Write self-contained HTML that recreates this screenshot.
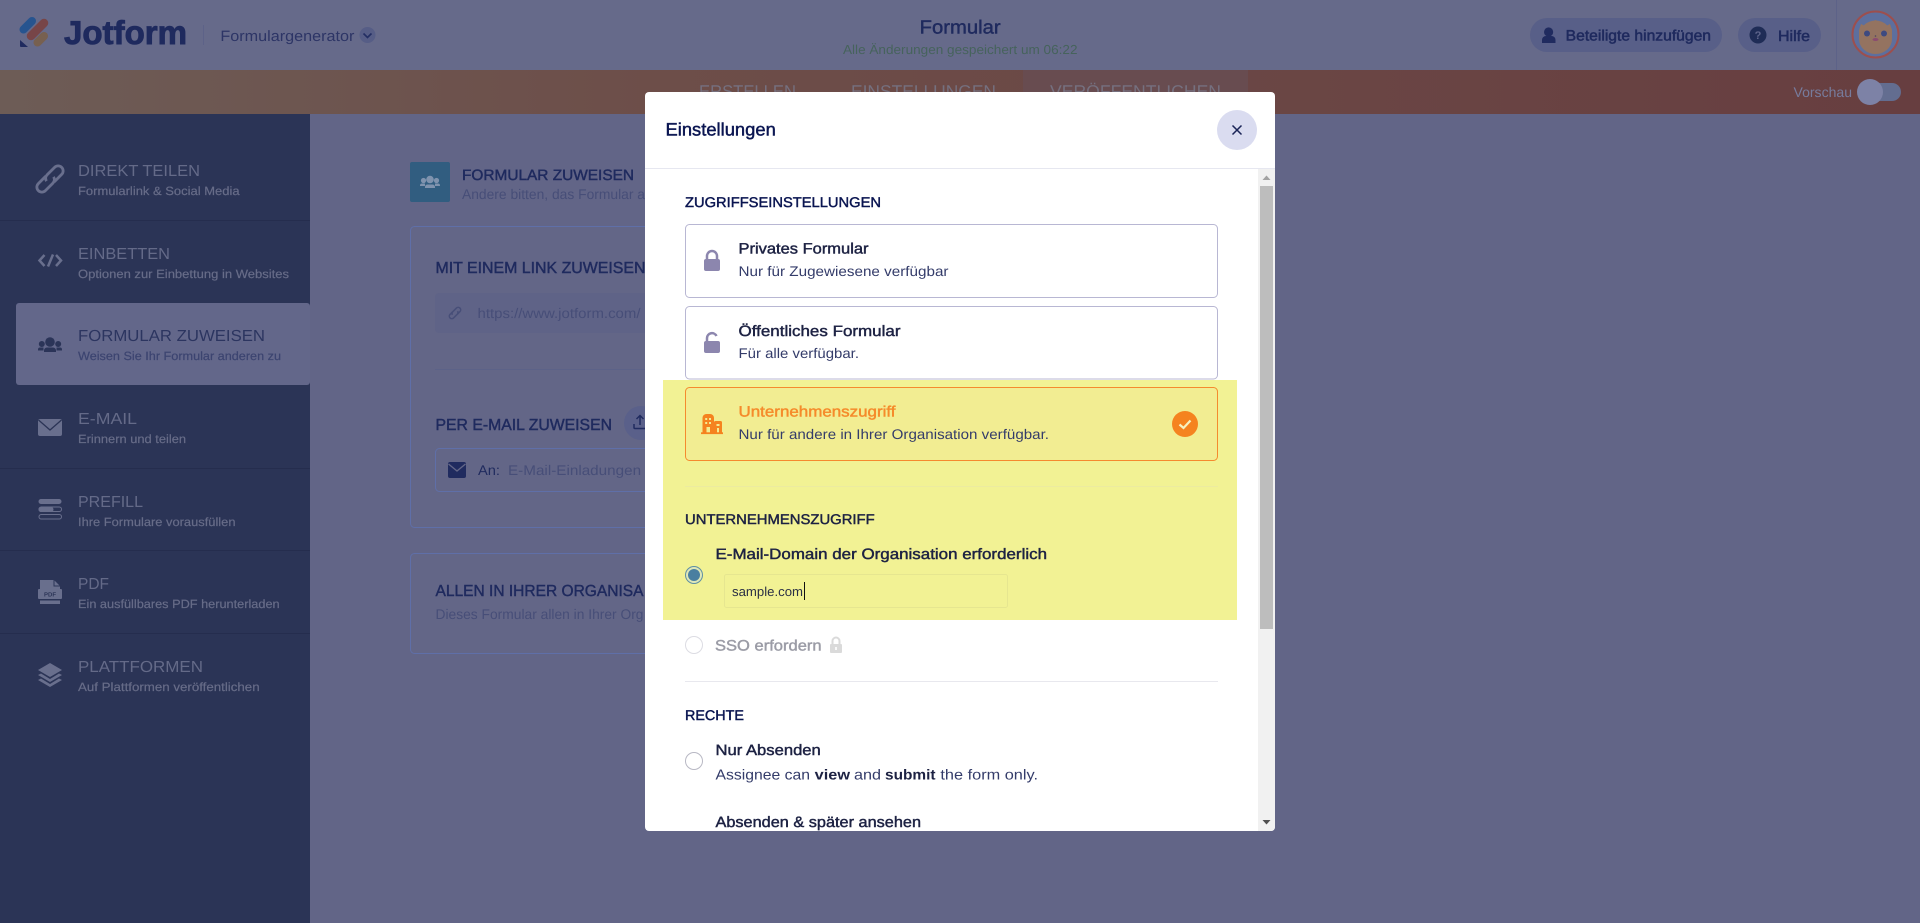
<!DOCTYPE html>
<html lang="de"><head><meta charset="utf-8"><title>Formular</title>
<style>
html,body{margin:0;padding:0;width:1920px;height:923px;overflow:hidden;background:#626587}
svg{display:block;position:absolute;left:0;top:0}
text{font-family:"Liberation Sans",sans-serif;text-rendering:geometricPrecision;stroke-width:0}
.m{stroke-width:.45}
.t{stroke-width:.2}
.b{font-weight:700}
.navy{fill:#1f2a5e;stroke:#1f2a5e}
.dk{fill:#0a1551;stroke:#0a1551}
.st{fill:#646a88;stroke:#646a88}
.ss{fill:#676c88;stroke:#676c88}
.mut{fill:#474e78;stroke:#474e78}
.body{fill:#343c6a;stroke:#343c6a}
.it{fill:#1d2243;stroke:#1d2243}
</style></head><body>
<svg width="1920" height="923" viewBox="0 0 1920 923" xmlns="http://www.w3.org/2000/svg">
<defs>
<linearGradient id="band" x1="0" x2="1" y1="0" y2="0"><stop offset="0" stop-color="#6d5c56"/><stop offset=".34" stop-color="#6d4e49"/><stop offset="1" stop-color="#673e40"/></linearGradient>
<clipPath id="mc"><rect x="645" y="92" width="630" height="739" rx="4"/></clipPath>
</defs>

<!-- page -->
<rect width="1920" height="923" fill="#626587"/>
<rect width="1920" height="70" fill="#666a8a"/>
<rect y="70" width="1920" height="44" fill="url(#band)"/>
<rect x="1023" y="70" width="225" height="44" fill="#684c50"/>

<!-- logo -->
<g fill="none" stroke-linecap="round">
<line x1="23.500" y1="29.500" x2="32" y2="21" stroke="#27548f" stroke-width="8"/>
<line x1="31" y1="36" x2="44" y2="23" stroke="#774548" stroke-width="8.500"/>
<line x1="37.500" y1="42.500" x2="44" y2="36" stroke="#776050" stroke-width="8"/>
</g>
<path d="M20 40 L28 47 H21 a1 1 0 0 1 -1 -1Z" fill="#202b5f"/>
<text x="64" y="44" font-size="33" class="b navy" style="stroke-width:.9" textLength="123" lengthAdjust="spacingAndGlyphs">Jotform</text>
<rect x="203" y="25" width="1" height="20" fill="#5d6288"/>
<text x="220.400" y="41" font-size="15" style="fill:#2d3566" textLength="134" lengthAdjust="spacingAndGlyphs">Formulargenerator</text>
<circle cx="367.500" cy="35" r="8" fill="#565d86"/>
<path d="M363.500 33.500 L367.500 37.500 L371.500 33.500" fill="none" stroke="#232e63" stroke-width="1.600"/>

<text x="919.600" y="33.700" font-size="19" class="navy m" textLength="81" lengthAdjust="spacingAndGlyphs">Formular</text>
<text x="843" y="54" font-size="13" style="fill:#46635c" textLength="234.500" lengthAdjust="spacingAndGlyphs">Alle Änderungen gespeichert um 06:22</text>

<rect x="1530" y="18" width="192" height="34" rx="17" fill="#585f88"/>
<circle cx="1548.600" cy="32" r="4.600" fill="#202b5f"/>
<path d="M1542 43 v-3 a4 4 0 0 1 4 -4 h5.500 a4 4 0 0 1 4 4 v3Z" fill="#202b5f"/>
<text x="1565.700" y="40.700" font-size="15" class="navy" style="stroke-width:.55" textLength="145.300" lengthAdjust="spacingAndGlyphs">Beteiligte hinzufügen</text>
<rect x="1738" y="18" width="83" height="34" rx="17" fill="#585f88"/>
<circle cx="1758" cy="35" r="8.500" fill="#1f2c56"/>
<text x="1758" y="39" font-size="11" class="b" text-anchor="middle" style="fill:#5f658c">?</text>
<text x="1778" y="41" font-size="15" class="navy" style="stroke-width:.55" textLength="32" lengthAdjust="spacingAndGlyphs">Hilfe</text>
<rect x="1836" y="0" width="1" height="70" fill="#5d6288"/>

<!-- avatar -->
<circle cx="1875.500" cy="34.500" r="22.500" fill="#5d6f9e"/>
<path d="M1859 30 l2 -6 4 2 10.500 -6 10.500 6 4 -2 2 6 v9 a16.500 15 0 0 1 -33 0Z" fill="#947360"/>
<circle cx="1875.500" cy="37" r="16.500" fill="#947360"/>
<circle cx="1875.500" cy="34.500" r="23" fill="none" stroke="#9c4f4e" stroke-width="2"/>
<circle cx="1867" cy="33.500" r="3" fill="#3e4a80"/><circle cx="1884" cy="33.500" r="3" fill="#3e4a80"/>
<circle cx="1875.500" cy="36" r=".8" fill="#4a4560"/>
<ellipse cx="1875.500" cy="39.500" rx="3" ry="1.500" fill="#8a4a70"/>

<!-- tabs -->
<text x="699" y="97" font-size="17" style="fill:#75707f" textLength="97" lengthAdjust="spacingAndGlyphs">ERSTELLEN</text>
<text x="851" y="97" font-size="17" style="fill:#75707f" textLength="145" lengthAdjust="spacingAndGlyphs">EINSTELLUNGEN</text>
<text x="1050" y="97" font-size="17" style="fill:#75707f" textLength="171" lengthAdjust="spacingAndGlyphs">VERÖFFENTLICHEN</text>
<text x="1793.500" y="97" font-size="14" style="fill:#777b9c" textLength="58.500" lengthAdjust="spacingAndGlyphs">Vorschau</text>
<rect x="1860" y="83" width="41" height="18" rx="9" fill="#636d90"/>
<circle cx="1870" cy="92" r="13" fill="#7d82a6"/>

<!-- sidebar -->
<rect y="114" width="310" height="809" fill="#2b3456"/>
<g fill="#252d4e">
<rect y="220" width="310" height="1"/><rect y="468" width="310" height="1"/><rect y="550" width="310" height="1"/><rect y="633" width="310" height="1"/>
</g>
<rect x="16" y="303" width="294" height="82" rx="3" fill="#63678a"/>

<g>
<!-- link icon -->
<g fill="none" stroke="#696f8d" stroke-width="2.800" transform="rotate(-45 50 179)">
<path d="M49 174 H38.500 a5 5 0 0 0 0 10 H49 a5 5 0 0 0 5 -4"/>
<path d="M51 184 H61.500 a5 5 0 0 0 0 -10 H51 a5 5 0 0 0 -5 4"/>
</g>
<text x="78" y="176" font-size="16" class="st" textLength="122" lengthAdjust="spacingAndGlyphs">DIREKT TEILEN</text>
<text x="78" y="195" font-size="12" class="ss t" textLength="161.600" lengthAdjust="spacingAndGlyphs">Formularlink &amp; Social Media</text>

<!-- code icon -->
<g fill="none" stroke="#696f8d" stroke-width="2.500">
<polyline points="44.500,255 39.500,260.500 44.500,266"/><line x1="53" y1="254.500" x2="48" y2="266.500"/><polyline points="56,255 61,260.500 56,266"/>
</g>
<text x="78" y="259" font-size="16" class="st" textLength="92" lengthAdjust="spacingAndGlyphs">EINBETTEN</text>
<text x="78" y="278" font-size="12" class="ss t" textLength="211" lengthAdjust="spacingAndGlyphs">Optionen zur Einbettung in Websites</text>

<!-- group icon -->
<g fill="#2b3458">
<circle cx="50" cy="342" r="4.800"/><circle cx="41.800" cy="344" r="3"/><circle cx="58.200" cy="344" r="3"/>
<path d="M44 352 v-1.500 a3 3 0 0 1 3 -3 h6 a3 3 0 0 1 3 3 v1.500Z"/>
<path d="M38 350.500 v-1 a2 2 0 0 1 2 -2 h3.500 v3Z M62 350.500 v-1 a2 2 0 0 0 -2 -2 h-3.500 v3Z"/>
</g>
<text x="78" y="341" font-size="16" style="fill:#2c3560" textLength="187" lengthAdjust="spacingAndGlyphs">FORMULAR ZUWEISEN</text>
<text x="78" y="360" font-size="12" class="t" style="fill:#3c4470;stroke:#3c4470" textLength="203" lengthAdjust="spacingAndGlyphs">Weisen Sie Ihr Formular anderen zu</text>

<!-- mail -->
<rect x="38" y="419" width="24" height="17" rx="2" fill="#696f8d"/>
<path d="M38.500 420 L50 430 L61.500 420" fill="none" stroke="#2b3456" stroke-width="1.300"/>
<text x="78" y="424" font-size="16" class="st" textLength="59" lengthAdjust="spacingAndGlyphs">E-MAIL</text>
<text x="78" y="443" font-size="12" class="ss t" textLength="108" lengthAdjust="spacingAndGlyphs">Erinnern und teilen</text>

<!-- prefill -->
<rect x="38.500" y="499" width="23" height="5" rx="2.500" fill="#696f8d"/>
<rect x="38.500" y="507" width="15" height="5" rx="2.500" fill="#696f8d"/>
<rect x="39" y="507" width="22.500" height="4.500" rx="2.250" fill="none" stroke="#696f8d"/>
<rect x="39" y="514.500" width="22.500" height="4.500" rx="2.250" fill="none" stroke="#696f8d"/>
<text x="78" y="507" font-size="16" class="st" textLength="65" lengthAdjust="spacingAndGlyphs">PREFILL</text>
<text x="78" y="526" font-size="12" class="ss t" textLength="157.500" lengthAdjust="spacingAndGlyphs">Ihre Formulare vorausfüllen</text>

<!-- pdf -->
<path d="M40 590 V580 H54 L60 586 V590Z" fill="#696f8d"/>
<path d="M54 580 V586 H60" fill="none" stroke="#2b3456"/>
<rect x="38" y="589" width="24" height="10" rx="1" fill="#696f8d"/>
<rect x="40" y="600.500" width="20" height="3.500" fill="#696f8d"/>
<text x="50" y="596.500" font-size="6" class="b" text-anchor="middle" style="fill:#2b3456">PDF</text>
<text x="78" y="589" font-size="16" class="st" textLength="31" lengthAdjust="spacingAndGlyphs">PDF</text>
<text x="78" y="608" font-size="12" class="ss t" textLength="201.600" lengthAdjust="spacingAndGlyphs">Ein ausfüllbares PDF herunterladen</text>

<!-- layers -->
<path d="M50 663 L62 670 L50 677 L38 670Z" fill="#696f8d"/>
<path d="M38 675 L41 673.500 L50 679 L59 673.500 L62 675 L50 682Z" fill="#696f8d"/>
<path d="M38 680 L41 678.500 L50 684 L59 678.500 L62 680 L50 687Z" fill="#696f8d"/>
<text x="78" y="672" font-size="16" class="st" textLength="125" lengthAdjust="spacingAndGlyphs">PLATTFORMEN</text>
<text x="78" y="691" font-size="12" class="ss t" textLength="181.600" lengthAdjust="spacingAndGlyphs">Auf Plattformen veröffentlichen</text>
</g>

<!-- main content -->
<rect x="410" y="162" width="40" height="40" rx="2" fill="#315d80"/>
<g fill="#7f93ae">
<circle cx="430" cy="179.500" r="3.800"/><circle cx="423.500" cy="180.500" r="2.600"/><circle cx="436.500" cy="180.500" r="2.600"/>
<path d="M425 188 v-1 a2.500 2.500 0 0 1 2.500 -2.500 h5 a2.500 2.500 0 0 1 2.500 2.500 v1Z"/>
<path d="M420 186 v-.5 a2 2 0 0 1 2 -2 h3 v2.500Z M440 186 v-.5 a2 2 0 0 0 -2 -2 h-3 v2.500Z"/>
</g>
<text x="462" y="180" font-size="15" class="navy m" textLength="172" lengthAdjust="spacingAndGlyphs">FORMULAR ZUWEISEN</text>
<text x="462" y="199" font-size="14" class="mut" textLength="183" lengthAdjust="spacingAndGlyphs">Andere bitten, das Formular a</text>

<rect x="410.500" y="226.500" width="400" height="301" rx="4" fill="#636687" stroke="#5f6fa8"/>
<text x="435.500" y="273" font-size="16" class="navy m" textLength="210" lengthAdjust="spacingAndGlyphs">MIT EINEM LINK ZUWEISEN</text>
<rect x="435" y="293" width="300" height="40" rx="4" fill="#5f6387"/>
<g fill="none" stroke="#474e78" stroke-width="1.500" transform="rotate(-45 455 313)">
<path d="M454 310.500 H450.500 a2.500 2.500 0 0 0 0 5 H456 a2.300 2.300 0 0 0 2 -2"/>
<path d="M456 315.500 H459.500 a2.500 2.500 0 0 0 0 -5 H454 a2.300 2.300 0 0 0 -2 2"/>
</g>
<text x="477.500" y="318" font-size="14" class="mut" textLength="163" lengthAdjust="spacingAndGlyphs">https://www.jotform.com/</text>
<rect x="435" y="369" width="300" height="1" fill="#5c6288"/>
<text x="435.500" y="430" font-size="16" class="navy m" textLength="176.500" lengthAdjust="spacingAndGlyphs">PER E-MAIL ZUWEISEN</text>
<circle cx="641" cy="423" r="17" fill="#5a608a"/>
<path d="M636.500 419 L640 415.500 L643.500 419 M640 415.500 V425 M634 424 v3.500 a1 1 0 0 0 1 1 h11.500" fill="none" stroke="#202b5f" stroke-width="1.500"/>
<rect x="435.500" y="448.500" width="300" height="43" rx="4" fill="#636687" stroke="#5f6fa8"/>
<rect x="448" y="462" width="18" height="16" rx="2" fill="#202b5f"/>
<path d="M448.500 464 L457 471 L465.500 464" fill="none" stroke="#636687" stroke-width="1.400"/>
<text x="478" y="475" font-size="14" class="navy" textLength="22" lengthAdjust="spacingAndGlyphs">An:</text>
<text x="508" y="475" font-size="14" class="mut" textLength="150" lengthAdjust="spacingAndGlyphs">E-Mail-Einladungen m</text>

<rect x="410.500" y="553.500" width="400" height="100" rx="4" fill="#636687" stroke="#5f6fa8"/>
<text x="435.500" y="596" font-size="16" class="navy m" textLength="208" lengthAdjust="spacingAndGlyphs">ALLEN IN IHRER ORGANISA</text>
<text x="435.500" y="619" font-size="14" class="mut" textLength="208" lengthAdjust="spacingAndGlyphs">Dieses Formular allen in Ihrer Org</text>

<!-- modal -->
<g clip-path="url(#mc)">
<rect x="645" y="92" width="630" height="739" fill="#fff"/>
<rect x="645" y="168" width="630" height="1" fill="#e6e7f0"/>
<text x="665.500" y="135.700" font-size="18" class="dk m" textLength="110.300" lengthAdjust="spacingAndGlyphs">Einstellungen</text>
<circle cx="1237" cy="130" r="20" fill="#dadcf0"/>
<path d="M1232.500 125.500 L1241.500 134.500 M1241.500 125.500 L1232.500 134.500" stroke="#1b2558" stroke-width="1.500" fill="none"/>

<!-- scrollbar -->
<rect x="1258" y="169" width="17" height="662" fill="#f1f1f1"/>
<rect x="1260" y="186" width="13" height="443" fill="#bdbdbd"/>
<path d="M1266.500 175.500 L1270.500 180 H1262.500Z" fill="#a3a3a3"/>
<path d="M1266.500 824.500 L1262.500 820 H1270.500Z" fill="#505050"/>

<text x="685" y="207" font-size="14" class="dk m" textLength="196" lengthAdjust="spacingAndGlyphs">ZUGRIFFSEINSTELLUNGEN</text>

<!-- card 1 -->
<rect x="685.500" y="224.500" width="532" height="73" rx="4" fill="#fff" stroke="#b8b7d3"/>
<path d="M707 260 v-4 a5 5 0 0 1 10 0 v4" fill="none" stroke="#8c86ae" stroke-width="2.500"/>
<rect x="704" y="259" width="16" height="12" rx="2" fill="#8c86ae"/>
<text x="738.500" y="253.500" font-size="15" class="it m" textLength="130" lengthAdjust="spacingAndGlyphs">Privates Formular</text>
<text x="738.500" y="276" font-size="14" class="body" textLength="210" lengthAdjust="spacingAndGlyphs">Nur für Zugewiesene verfügbar</text>

<!-- card 2 -->
<rect x="685.500" y="306.500" width="532" height="72.500" rx="4" fill="#fff" stroke="#b8b7d3"/>
<path d="M707 342 v-4 a5 5 0 0 1 9.500 -2" fill="none" stroke="#8c86ae" stroke-width="2.500"/>
<rect x="704" y="341" width="16" height="12" rx="2" fill="#8c86ae"/>
<text x="738.500" y="336" font-size="15" class="it m" textLength="162" lengthAdjust="spacingAndGlyphs">Öffentliches Formular</text>
<text x="738.500" y="358" font-size="14" class="body" textLength="120.500" lengthAdjust="spacingAndGlyphs">Für alle verfügbar.</text>

<!-- highlight -->
<rect x="663" y="380" width="574" height="240" fill="#f2f294"/>
<rect x="685.500" y="387.500" width="532" height="73" rx="4" fill="#f2ed92" stroke="#f58a2e"/>
<g fill="#f5831f">
<path d="M702.500 433 V418 a4 4 0 0 1 4 -4 h3.500 a4 4 0 0 1 4 4 V433Z"/>
<path d="M714 433 V422.500 a1.500 1.500 0 0 1 1.500 -1.500 h5 a1.500 1.500 0 0 1 1.500 1.500 V433Z"/>
<rect x="701" y="432.300" width="22" height="1.800"/>
</g>
<g fill="#f2ed92">
<rect x="705.200" y="418" width="2" height="2"/><rect x="709" y="418" width="2" height="2"/>
<rect x="705.200" y="422" width="2" height="2"/><rect x="709" y="422" width="2" height="2"/>
<rect x="706.500" y="427" width="3.500" height="5.300"/>
<rect x="716.500" y="424" width="3" height="2"/><rect x="717" y="428" width="2" height="4.300"/>
</g>
<text x="738.500" y="416.700" font-size="15" class="m" style="fill:#f58b2b;stroke:#f58b2b" textLength="157" lengthAdjust="spacingAndGlyphs">Unternehmenszugriff</text>
<text x="738.500" y="439" font-size="14" class="body" textLength="310.500" lengthAdjust="spacingAndGlyphs">Nur für andere in Ihrer Organisation verfügbar.</text>
<circle cx="1185" cy="424" r="13" fill="#f5831f"/>
<path d="M1179.500 424.500 L1183.500 428 L1190.500 420.500" fill="none" stroke="#f6f2c0" stroke-width="2.200"/>
<rect x="685" y="486" width="533" height="1" fill="#ecebA0"/>
<text x="685" y="524" font-size="14" class="it m" textLength="189.700" lengthAdjust="spacingAndGlyphs">UNTERNEHMENSZUGRIFF</text>
<text x="715.500" y="559" font-size="15" class="it m" textLength="331.500" lengthAdjust="spacingAndGlyphs">E-Mail-Domain der Organisation erforderlich</text>
<circle cx="694" cy="575" r="8.500" fill="#dfe8b8" stroke="#5f8fa4"/>
<circle cx="694" cy="575" r="6" fill="#4a7fa0"/>
<rect x="724.500" y="574.500" width="283" height="33" rx="2" fill="#f2f294" stroke="#e6e690"/>
<text x="732" y="596" font-size="13" style="fill:#2a2f45" textLength="71" lengthAdjust="spacingAndGlyphs">sample.com</text>
<rect x="804" y="582" width="1" height="18" fill="#111"/>

<!-- sso -->
<circle cx="694" cy="645" r="8.500" fill="#fff" stroke="#dcdce3"/>
<text x="715" y="650.700" font-size="15" class="m" style="fill:#9b9ca6;stroke:#9b9ca6" textLength="106.600" lengthAdjust="spacingAndGlyphs">SSO erfordern</text>
<path d="M832.500 645 v-4 a3.500 3.500 0 0 1 7 0 v4" fill="none" stroke="#dadada" stroke-width="2"/>
<path fill-rule="evenodd" d="M831 644 h10 a1 1 0 0 1 1 1 v7 a1 1 0 0 1 -1 1 h-10 a1 1 0 0 1 -1 -1 v-7 a1 1 0 0 1 1 -1Z M835.200 647 v3 h1.600 v-3Z" fill="#dadada"/>
<rect x="685" y="681" width="533" height="1" fill="#e8e8ee"/>

<!-- rechte -->
<text x="685" y="720" font-size="14" class="dk m" textLength="59" lengthAdjust="spacingAndGlyphs">RECHTE</text>
<circle cx="694" cy="761" r="8.500" fill="#fff" stroke="#b8b8c4"/>
<text x="715.500" y="755" font-size="15" class="it m" textLength="105.300" lengthAdjust="spacingAndGlyphs">Nur Absenden</text>
<g font-size="14.500">
<text x="715.500" y="779.300" class="body" textLength="94.500" lengthAdjust="spacingAndGlyphs">Assignee can</text>
<text x="814.700" y="779.300" class="it b" textLength="35.300" lengthAdjust="spacingAndGlyphs">view</text>
<text x="854" y="779.300" class="body" textLength="27" lengthAdjust="spacingAndGlyphs">and</text>
<text x="885" y="779.300" class="it b" textLength="50.500" lengthAdjust="spacingAndGlyphs">submit</text>
<text x="940.400" y="779.300" class="body" textLength="97.600" lengthAdjust="spacingAndGlyphs">the form only.</text>
</g>
<text x="715.500" y="827" font-size="15" class="it m" textLength="205.500" lengthAdjust="spacingAndGlyphs">Absenden &amp; später ansehen</text>
</g>
</svg>
</body></html>
